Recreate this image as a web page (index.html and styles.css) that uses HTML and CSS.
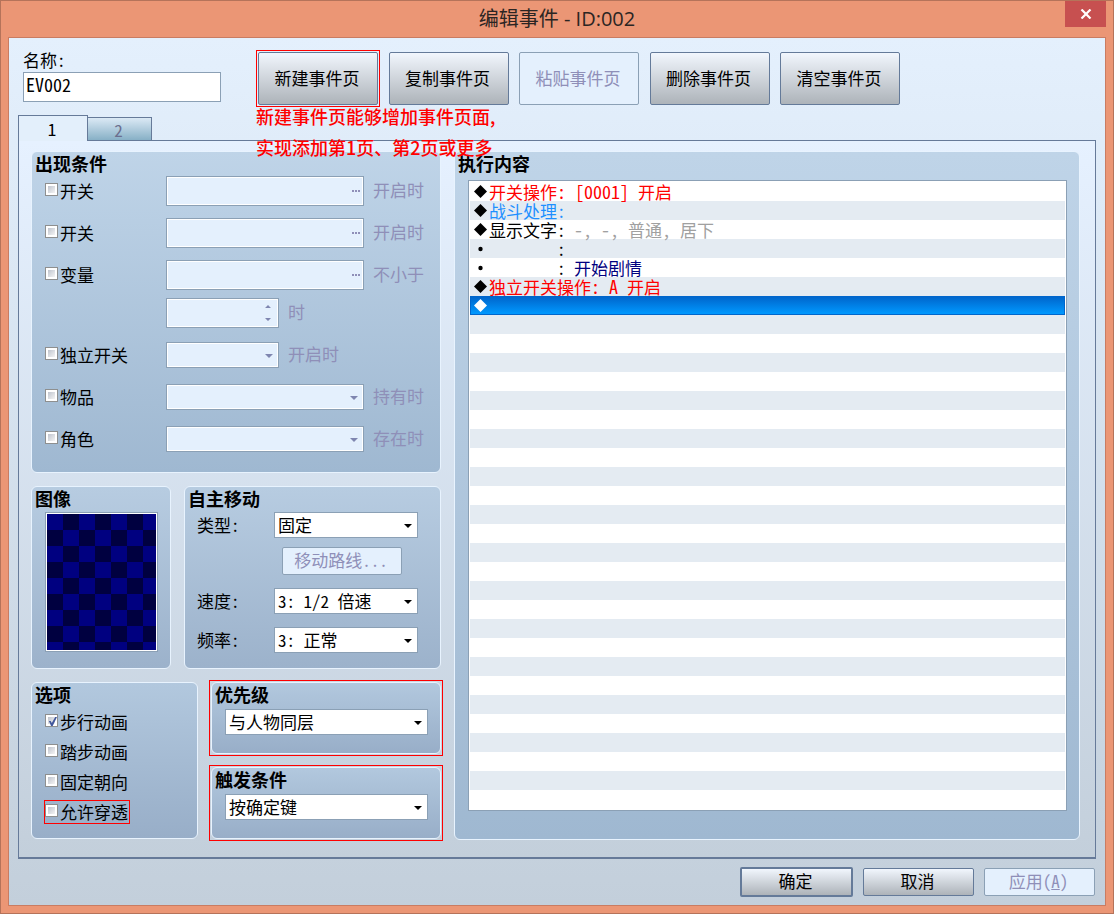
FILE: index.html
```html
<!DOCTYPE html>
<html lang="zh-CN">
<head>
<meta charset="utf-8">
<title>编辑事件 - ID:002</title>
<link rel="stylesheet" href="styles.css">
</head>
<body>
<div class="window">
  <header class="titlebar">
    <h1 class="titlebar-text">编辑事件 - ID:002</h1>
    <button class="close" type="button" aria-label="关闭">
      <svg width="12" height="10" viewBox="0 0 12 10"><path d="M1.5 .5 10.500 9.500M10.500 .5 1.500 9.500" stroke="#fff" stroke-width="2.200" fill="none"/></svg>
    </button>
  </header>
  <main class="client">
    <section class="toolbar">
      <div class="name-field">
        <label for="name">名称:</label>
        <input class="field name-input" id="name" type="text" value="EV002">
      </div>
      <div class="page-actions">
        <button class="btn btn-tall marked" type="button">新建事件页</button>
        <button class="btn btn-tall" type="button">复制事件页</button>
        <button class="btn btn-tall" type="button" disabled>粘贴事件页</button>
        <button class="btn btn-tall" type="button">删除事件页</button>
        <button class="btn btn-tall" type="button">清空事件页</button>
        <p class="note">新建事件页能够增加事件页面,<br>实现添加第1页、第2页或更多</p>
      </div>
    </section>

    <div class="tabs" role="tablist">
      <button class="tab tab-active" type="button" role="tab" aria-selected="true">1</button>
      <button class="tab" type="button" role="tab" aria-selected="false">2</button>
    </div>

    <section class="sheet">
      <div class="settings">
        <section class="group">
          <h2 class="group-title">出现条件</h2>
          <div class="conditions">
            <div class="cond">
              <label class="check"><input type="checkbox"><span>开关</span></label>
              <button class="field picker" type="button" disabled aria-label="选择开关"><svg width="8" height="2" shape-rendering="crispEdges"><path d="M0 0h2v2H0zM3 0h2v2H3zM6 0h2v2H6z" fill="#8f8fb8"/></svg></button>
              <span class="hint">开启时</span>
            </div>
            <div class="cond">
              <label class="check"><input type="checkbox"><span>开关</span></label>
              <button class="field picker" type="button" disabled aria-label="选择开关"><svg width="8" height="2" shape-rendering="crispEdges"><path d="M0 0h2v2H0zM3 0h2v2H3zM6 0h2v2H6z" fill="#8f8fb8"/></svg></button>
              <span class="hint">开启时</span>
            </div>
            <div class="cond">
              <label class="check"><input type="checkbox"><span>变量</span></label>
              <button class="field picker" type="button" disabled aria-label="选择变量"><svg width="8" height="2" shape-rendering="crispEdges"><path d="M0 0h2v2H0zM3 0h2v2H3zM6 0h2v2H6z" fill="#8f8fb8"/></svg></button>
              <span class="hint">不小于</span>
            </div>
            <div class="cond cond-value">
              <div class="combo combo-short">
                <input class="field" type="text" disabled aria-label="变量值">
                <svg class="arrow arrow-spin" width="6" height="16" viewBox="0 0 6 16"><path d="M0 3 3 0 6 3zM0 13h6L3 16z" fill="#7f86b0"/></svg>
              </div>
              <span class="hint">时</span>
            </div>
            <div class="cond">
              <label class="check"><input type="checkbox"><span>独立开关</span></label>
              <div class="combo combo-short">
                <select class="field" disabled aria-label="独立开关"><option></option></select>
                <svg class="arrow" width="8" height="4" viewBox="0 0 8 4"><path d="M0 0h8L4 4z" fill="#7f86b0"/></svg>
              </div>
              <span class="hint">开启时</span>
            </div>
            <div class="cond">
              <label class="check"><input type="checkbox"><span>物品</span></label>
              <div class="combo">
                <select class="field" disabled aria-label="物品"><option></option></select>
                <svg class="arrow" width="8" height="4" viewBox="0 0 8 4"><path d="M0 0h8L4 4z" fill="#7f86b0"/></svg>
              </div>
              <span class="hint">持有时</span>
            </div>
            <div class="cond">
              <label class="check"><input type="checkbox"><span>角色</span></label>
              <div class="combo">
                <select class="field" disabled aria-label="角色"><option></option></select>
                <svg class="arrow" width="8" height="4" viewBox="0 0 8 4"><path d="M0 0h8L4 4z" fill="#7f86b0"/></svg>
              </div>
              <span class="hint">存在时</span>
            </div>
          </div>
        </section>

        <div class="row-middle">
          <section class="group group-mid">
            <h2 class="group-title">图像</h2>
            <div class="sprite"></div>
          </section>
          <section class="group group-mid">
            <h2 class="group-title">自主移动</h2>
            <div class="movement">
              <label for="move-type">类型:</label>
              <div class="combo">
                <select class="field" id="move-type"><option>固定</option></select>
                <svg class="arrow" width="8" height="4" viewBox="0 0 8 4"><path d="M0 0h8L4 4z"/></svg>
              </div>
              <button class="btn btn-route" type="button" disabled>移动路线...</button>
              <label for="move-speed">速度:</label>
              <div class="combo">
                <select class="field" id="move-speed"><option>3: 1/2 倍速</option></select>
                <svg class="arrow" width="8" height="4" viewBox="0 0 8 4"><path d="M0 0h8L4 4z"/></svg>
              </div>
              <label for="move-freq">频率:</label>
              <div class="combo">
                <select class="field" id="move-freq"><option>3: 正常</option></select>
                <svg class="arrow" width="8" height="4" viewBox="0 0 8 4"><path d="M0 0h8L4 4z"/></svg>
              </div>
            </div>
          </section>
        </div>

        <div class="row-bottom">
          <section class="group group-low">
            <h2 class="group-title">选项</h2>
            <div class="options">
              <label class="check"><input type="checkbox" checked><span>步行动画</span></label>
              <label class="check"><input type="checkbox"><span>踏步动画</span></label>
              <label class="check"><input type="checkbox"><span>固定朝向</span></label>
              <label class="check check-marked"><input type="checkbox"><span>允许穿透</span></label>
            </div>
          </section>
          <div class="stack">
            <section class="group group-low marked">
              <h2 class="group-title" id="priority-title">优先级</h2>
              <div class="combo combo-group">
                <select class="field" aria-labelledby="priority-title"><option>与人物同层</option></select>
                <svg class="arrow" width="8" height="4" viewBox="0 0 8 4"><path d="M0 0h8L4 4z"/></svg>
              </div>
            </section>
            <section class="group group-low marked">
              <h2 class="group-title" id="trigger-title">触发条件</h2>
              <div class="combo combo-group">
                <select class="field" aria-labelledby="trigger-title"><option>按确定键</option></select>
                <svg class="arrow" width="8" height="4" viewBox="0 0 8 4"><path d="M0 0h8L4 4z"/></svg>
              </div>
            </section>
          </div>
        </div>
      </div>

      <section class="group group-commands">
        <h2 class="group-title">执行内容</h2>
        <ul class="commands">
          <li class="red"><svg class="mark" viewBox="0 0 17 17"><path d="M8.500 2 15 8.500 8.500 15 2 8.500z"/></svg>开关操作<span class="latin">: [0001] </span>开启</li>
          <li class="blue"><svg class="mark" viewBox="0 0 17 17"><path d="M8.500 2 15 8.500 8.500 15 2 8.500z"/></svg>战斗处理:</li>
          <li><svg class="mark" viewBox="0 0 17 17"><path d="M8.500 2 15 8.500 8.500 15 2 8.500z"/></svg>显示文字: <span class="grey"><span class="latin">-, -, </span>普通<span class="latin">, </span>居下</span></li>
          <li><svg class="mark" viewBox="0 0 17 17"><circle cx="8.500" cy="9" r="2.200"/></svg>        :</li>
          <li><svg class="mark" viewBox="0 0 17 17"><circle cx="8.500" cy="9" r="2.200"/></svg>        : <span class="navy">开始剧情</span></li>
          <li class="red"><svg class="mark" viewBox="0 0 17 17"><path d="M8.500 2 15 8.500 8.500 15 2 8.500z"/></svg>独立开关操作<span class="latin">: A </span>开启</li>
          <li class="selected"><svg class="mark" viewBox="0 0 17 17"><path d="M8.500 2 15 8.500 8.500 15 2 8.500z"/></svg></li>
        </ul>
      </section>
    </section>

    <footer class="footer">
      <button class="btn btn-default" type="button">确定</button>
      <button class="btn" type="button">取消</button>
      <button class="btn" type="button" disabled>应用(<u>A</u>)</button>
    </footer>
  </main>
</div>
</body>
</html>
```
FILE: styles.css
```css
* {
  box-sizing: border-box;
}

body {
  margin: 0;
  font: 17px/24px "Noto Sans Mono CJK SC", "Noto Sans CJK SC", sans-serif;
  color: #000;
}

button,
input,
select {
  margin: 0;
  font: inherit;
  color: inherit;
}

h1,
h2,
p,
ul {
  margin: 0;
  padding: 0;
}

.window {
  display: flex;
  flex-direction: column;
  min-height: 100vh;
  padding: 0 7px 7px;
  border: 1px solid #b5735a;
  background: #eb9675;
}

.titlebar {
  position: relative;
  display: flex;
  justify-content: center;
  height: 36px;
}

.titlebar-text {
  font: 20px/36px "Open Sans", "Noto Sans CJK SC", sans-serif;
  color: #2b2523;
}

.close {
  position: absolute;
  top: 0;
  right: 0;
  display: grid;
  place-items: center;
  width: 41px;
  height: 26px;
  padding: 0;
  border: 0;
  background: #c75050;
}

.client {
  flex: 1;
  display: flex;
  flex-direction: column;
  border: 1px solid #c97c62;
  background: linear-gradient(#e4f0fd, #c3cfdb);
}

.toolbar {
  display: flex;
  align-items: flex-start;
  gap: 37px;
  height: 77px;
  padding: 10px 14px 0;
}

.name-field {
  display: flex;
  flex-direction: column;
  width: 198px;
}

.field {
  display: block;
  width: 100%;
  height: 30px;
  padding: 0 3px 2px;
  border: 1px solid #8ba0b5;
  border-radius: 0;
  outline: 0;
  background: #fff;
}

.field:disabled {
  background: #e4f0fd;
  box-shadow: inset 0 0 0 1px #fff;
  opacity: 1;
}

.name-input {
  padding: 0 2px 6px;
  font-size: 18px;
}

.page-actions {
  position: relative;
  display: flex;
  justify-content: space-between;
  width: 642px;
  margin-top: 4px;
}

.btn {
  width: 111px;
  height: 28px;
  padding: 0 2px 2px 0;
  border: 1px solid #647a99;
  border-radius: 2px;
  background: linear-gradient(#f1f6fd, #adb3b9);
}

.btn:disabled {
  border-color: #8ba0b5;
  background: #e4f0fd;
  color: #8f8fb8;
}

.btn-tall {
  width: 120px;
  height: 53px;
}

.marked {
  position: relative;
}

.marked::after {
  content: "";
  position: absolute;
  inset: -3px;
  border: 1px solid #f00;
  pointer-events: none;
}

.note {
  position: absolute;
  top: 49px;
  left: -2px;
  z-index: 2;
  font: 500 18px/31px "Noto Sans CJK SC", sans-serif;
  color: #f00;
  white-space: nowrap;
}

.tabs {
  display: flex;
  align-items: flex-end;
  margin: 0 9px -1px;
}

.tab {
  width: 64px;
  height: 24px;
  padding: 0 2px 0 0;
  border: 1px solid #667a99;
  border-left: 0;
  background: linear-gradient(#dbe9f5, #87b0c6);
  color: #6b6f8f;
}

.tab-active {
  z-index: 1;
  width: 70px;
  height: 26px;
  border-left: 1px solid #667a99;
  border-bottom: 0;
  background: #e3effb;
  color: #000;
}

.sheet {
  flex: 1;
  display: grid;
  grid-template-columns: 410px 1fr;
  gap: 13px;
  margin: 0 9px;
  padding: 10px 15px 17px 12px;
  border: 1px solid #667a99;
  border-bottom-width: 2px;
  background: linear-gradient(#e6f1ff, #c3cfdb);
}

.group {
  border: 1px solid #e8f3fe;
  border-radius: 6px;
  background: linear-gradient(#bfd4e8, #9fb8d1);
}

.group-mid {
  background: linear-gradient(#b7cce1, #9cb2cb);
}

.group-low {
  background: linear-gradient(#b2c8de, #98aec8);
}

.group-title {
  padding: 0 0 2px 3px;
  font-size: 18px;
  line-height: 22px;
  font-weight: 700;
}

.settings {
  display: flex;
  flex-direction: column;
  gap: 13px;
}

.conditions {
  display: flex;
  flex-direction: column;
  gap: 12px;
  padding: 0 0 18px 13px;
}

.cond {
  display: grid;
  grid-template-columns: 121px auto auto;
  justify-content: start;
  align-items: center;
  height: 30px;
}

.cond-value {
  margin-top: -4px;
}

.cond-value .combo {
  grid-column: 2;
}

.check {
  display: flex;
  align-items: center;
  gap: 2px;
}

.check input {
  appearance: none;
  display: grid;
  place-items: center;
  width: 13px;
  height: 13px;
  margin-bottom: 3px;
  padding: 2px;
  border: 1px solid #8e8f8f;
  background: linear-gradient(135deg, #bfc4ce, #f4f4f4) content-box, #fff;
}

.check input:checked::before {
  content: "";
  width: 9px;
  height: 9px;
  background: #42589c;
  clip-path: polygon(10% 45%, 30% 45%, 42% 66%, 80% 0, 100% 0, 52% 100%, 34% 100%);
}

.picker {
  display: flex;
  justify-content: flex-end;
  align-items: center;
  width: 198px;
  padding-bottom: 0;
}

.hint {
  padding: 0 0 3px 9px;
  color: #8f8fb8;
}

.combo {
  position: relative;
  width: 198px;
}

.combo-short {
  width: 113px;
}

.combo select {
  appearance: none;
  height: 26px;
}

.arrow {
  position: absolute;
  top: 12px;
  right: 6px;
  pointer-events: none;
}

.arrow-spin {
  top: 7px;
  right: 8px;
}

.row-middle {
  display: grid;
  grid-template-columns: 140px 1fr;
  gap: 13px;
}

.sprite {
  height: 140px;
  margin: 1px 12px 16px 13px;
  padding: 1px;
  border: 1px solid #8ba0b5;
  background:
    repeating-conic-gradient(#000040 0 25%, #000080 0 50%) 0 0 / 32px 32px content-box,
    #fff;
}

.movement {
  display: grid;
  grid-template-columns: 77px 144px;
  align-items: center;
  row-gap: 13px;
  padding: 1px 0 0 12px;
}

.movement .combo {
  width: 144px;
}

.btn-route {
  grid-column: 2;
  width: 120px;
  margin: -4px 0 0 8px;
}

.row-bottom {
  display: grid;
  grid-template-columns: 167px 1fr;
  gap: 13px;
}

.options {
  padding: 0 0 11px 13px;
}

.options .check {
  width: max-content;
  height: 22px;
  margin: 4px 0 8px;
}

.options .check-marked {
  margin-bottom: 4px;
  padding-right: 1px;
  outline: 1px solid #f00;
}

.stack {
  display: flex;
  flex-direction: column;
  gap: 13px;
}

.combo-group {
  width: auto;
  margin: 2px 12px 18px 13px;
}

.group-commands {
  display: flex;
  flex-direction: column;
}

.commands {
  flex: 1;
  margin: 4px 12px 28px 13px;
  padding: 1px;
  border: 1px solid #8ba0b5;
  list-style: none;
  background: repeating-linear-gradient(#fff 0 19px, #e4ebf2 19px 38px) content-box, #fff;
}

.commands li {
  display: flex;
  align-items: center;
  height: 19px;
  padding-left: 2px;
  line-height: 19px;
  white-space: pre;
}

.latin {
  font-size: 18px;
}

.mark {
  width: 17px;
  height: 17px;
  fill: #000;
}

.red {
  color: #f00;
}

.blue {
  color: #1e90ff;
}

.grey {
  color: #a0a0a0;
}

.navy {
  color: #000080;
}

.commands .selected {
  padding-left: 1px;
  border: 1px solid #0066cc;
  background: linear-gradient(#0066cc, #0099ff);
}

.selected .mark {
  fill: #fff;
}

.footer {
  display: flex;
  justify-content: flex-end;
  align-items: center;
  gap: 10px;
  padding: 8px 10px 8px;
}

.btn-default {
  width: 113px;
  height: 30px;
  border-width: 2px;
}
```
